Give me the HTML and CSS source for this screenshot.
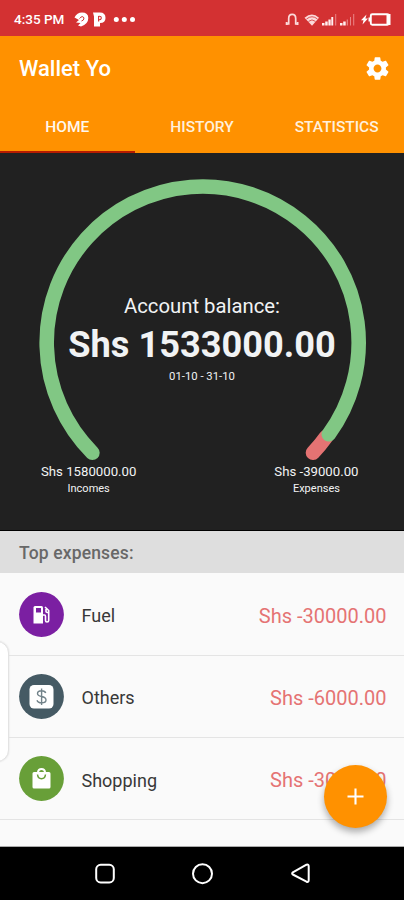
FILE: index.html
```
<!DOCTYPE html>
<html lang="en">
<head>
<meta charset="utf-8">
<title>Wallet Yo</title>
<link rel="stylesheet" href="styles.css">
</head>
<body>
<div class="screen">
  <div class="status">
    <span class="clock">4:35 PM</span>
    <svg class="notices" width="64" height="18" viewBox="0 0 64 18" fill="#fff">
      <path d="M.5 7.500 Q3 2.500 8 2.500 Q14.300 2.500 14.300 8 Q14.300 14 7 16.500 L4 15.500 L6.500 13 L2 12.500 L5 10 L.5 7.500Z"/>
      <path d="M5.500 8.500 Q8.500 5 10 8 Q10 10.500 7.500 11" fill="none" stroke="#d33132" stroke-width="1"/>
      <path d="M19 2.500 H26 Q31.500 2.500 31.500 8 Q31.500 13 26 13 V16.500 H20 V6.500Z"/>
      <path d="M24.600 6 V11.500 M24.600 6.300 Q27.700 6 27.200 8.500 Q26.700 10 24.700 9.700" fill="none" stroke="#d33132" stroke-width="1.100"/>
      <circle cx="42.300" cy="9.500" r="2.500"/><circle cx="50.300" cy="9.500" r="2.500"/><circle cx="58.500" cy="9.500" r="2.500"/>
    </svg>
    <svg class="signals" width="108" height="18" viewBox="0 0 108 18" fill="#fff">
      <g fill="none" stroke="#fbdada">
        <path d="M2 14 H4.700 V8.500 Q4.700 4.300 8.200 4.300 Q11.700 4.300 11.700 8.500 V14 H14" stroke-width="1.700"/>
        <path d="M2.700 12 V15 M13.500 12 V15" stroke-width="2"/>
      </g>
      <path d="M20.500 7.800 Q28 1 35 7.800 L28 15.800Z" fill="#fbdada"/>
      <path d="M22.500 9 Q28 4.500 33.500 9 M24.500 11.400 Q28 8.400 31.500 11.400" fill="none" stroke="#d33132" stroke-width=".8"/>
      <g fill="#fff0f0"><path d="M38 13h2.500v2.500h-2.500zM41.200 11.500h2.500v4h-2.500zM44.400 9.500h2.300v6h-2.300zM47.300 7h1.900v8.500h-1.900zM56 13h2.500v2.500h-2.500zM59.200 11.500h2.500v4h-2.500z"/></g>
      <g fill="#e98587"><path d="M51.200 4h1v11.500h-1zM62.700 9.500h1.200v6h-1.200zM66 7h1v8.500h-1zM69.200 4h1v11.500h-1z"/></g>
      <path d="M82.500 4.500 L77 10.200 H79.500 L78.500 14.500 L84 8.500 H81.400Z"/>
      <rect x="86.800" y="4.300" width="18" height="10.400" rx="1.500" fill="none" stroke="#fff" stroke-width="1.900"/>
      <path d="M84.500 7.500h2.500v4h-2.500zM102.500 4h4v11h-4z"/>
    </svg>
  </div>
  <header class="appbar">
    <div class="titlebar">
      <h1>Wallet Yo</h1>
      <svg width="27" height="27" viewBox="0 0 24 24" fill="#fff"><path d="M19.430 12.980c.04-.32.07-.64.07-.98s-.03-.66-.07-.98l2.110-1.650c.19-.15.24-.42.12-.64l-2-3.460c-.12-.22-.39-.3-.61-.22l-2.490 1c-.52-.4-1.080-.73-1.690-.98l-.38-2.650C14.460 2.180 14.250 2 14 2h-4c-.25 0-.46.18-.49.42l-.38 2.650c-.61.25-1.170.59-1.690.98l-2.490-1c-.23-.09-.49 0-.61.22l-2 3.460c-.13.22-.07.49.12.64l2.110 1.650c-.04.32-.07.65-.07.98s.03.66.07.98l-2.110 1.650c-.19.15-.24.42-.12.64l2 3.460c.12.22.39.3.61.22l2.490-1c.52.4 1.080.73 1.690.98l.38 2.650c.03.24.24.42.49.42h4c.25 0 .46-.18.49-.42l.38-2.650c.61-.25 1.170-.59 1.690-.98l2.490 1c.23.09.49 0 .61-.22l2-3.460c.12-.22.07-.49-.12-.64l-2.110-1.650zM12 15.500c-1.930 0-3.500-1.570-3.500-3.500s1.570-3.500 3.500-3.500 3.500 1.570 3.500 3.500-1.570 3.500-3.500 3.500z"/></svg>
    </div>
    <nav class="tabs"><a class="tab active">HOME</a><a class="tab">HISTORY</a><a class="tab">STATISTICS</a></nav>
  </header>
  <section class="summary">
    <svg class="gauge" width="404" height="310" viewBox="0 0 404 310" fill="none" stroke-width="14.600" stroke-linecap="round">
      <path d="M326 284 A156 156 0 0 1 313 299.800" stroke="#e57373"/>
      <path d="M92.400 299.800 A156 156 0 1 1 328.800 281.300" stroke="#81c784"/>
    </svg>
    <div class="balance">
      <div class="label">Account balance:</div>
      <div class="total">Shs 1533000.00</div>
      <div class="period">01-10 - 31-10</div>
    </div>
    <div class="ends">
      <div class="end"><div class="sum">Shs 1580000.00</div><div class="kind">Incomes</div></div>
      <div class="end"><div class="sum">Shs -39000.00</div><div class="kind">Expenses</div></div>
    </div>
  </section>
  <h2 class="section">Top expenses:</h2>
  <main class="list">
    <div class="row">
      <svg class="icon" width="45" height="45" viewBox="0 0 45 45"><circle cx="22.500" cy="22.500" r="22.400" fill="#7b1fa2"/>
        <path d="M14.500 31.500 V15.500 Q14.500 14 16 14 H22.500 Q24 14 24 15.500 V31.500Z" fill="#fff"/><path d="M17 16h5v4.500h-5z" fill="#7b1fa2"/>
        <path d="M24 23 H25.500 Q26.500 23 26.500 24.500 V28.500 Q26.500 30 28 30 Q29.700 30 29.700 28.500 V18.500 L26 15 M27 17 V19.500 Q27 20.500 29.500 20.500" fill="none" stroke="#fff" stroke-width="1.600"/></svg>
      <span class="name">Fuel</span><span class="amount">Shs -30000.00</span>
    </div>
    <div class="row">
      <svg class="icon" width="45" height="45" viewBox="0 0 45 45"><circle cx="22.500" cy="22.500" r="22.400" fill="#455a64"/><rect x="10.500" y="11" width="24" height="23.500" rx="4.500" fill="#fff"/>
        <path d="M26.700 19 Q26 16.700 22.500 16.700 Q18.500 16.700 18.500 19.500 Q18.500 21.700 22.500 22.500 Q27 23.300 27 26 Q27 28.800 22.700 28.800 Q18.700 28.800 18 26.200 M22.600 14.500 V31" fill="none" stroke="#72838a" stroke-width="1.400"/></svg>
      <span class="name">Others</span><span class="amount">Shs -6000.00</span>
    </div>
    <div class="row">
      <svg class="icon" width="45" height="45" viewBox="0 0 45 45"><circle cx="22.500" cy="22.500" r="22.400" fill="#689f38"/><path d="M15 16 H18 Q18.500 12 22.500 12 Q26.500 12 27 16 H30 Q31.500 16 31.500 17.500 V31 Q31.500 32.500 30 32.500 H15 Q13.500 32.500 13.500 31 V17.500 Q13.500 16 15 16Z" fill="#fff"/>
        <path d="M20 16 Q20.500 13.900 22.500 13.900 Q24.500 13.900 25 16Z" fill="#689f38"/><path d="M18.500 18.500 Q19 22.700 22.500 22.700 Q26 22.700 26.500 18.500" fill="none" stroke="#689f38" stroke-width="1.500"/></svg>
      <span class="name">Shopping</span><span class="amount">Shs -3000.00</span>
    </div>
    <div class="handle"></div>
    <div class="fab"><svg width="17" height="17" viewBox="0 0 17 17"><path d="M8.500 .500 V16.500 M.500 8.500 H16.500" stroke="#fff" stroke-width="2.100"/></svg></div>
  </main>
  <footer class="navbar">
    <svg width="404" height="53" viewBox="0 0 404 53" fill="none" stroke="#fff" stroke-width="2" stroke-linejoin="round">
      <rect x="96.200" y="17.800" width="17.600" height="17.600" rx="4.500"/><circle cx="202.500" cy="26.700" r="9.500"/><path d="M292.800 25.300 L306.500 17.700 Q308.700 17 308.700 19.500 V33 Q308.700 35.500 306.500 34.700 L292.800 27.500 Q291.500 26.500 292.800 25.300Z"/>
    </svg>
  </footer>
</div>
</body>
</html>
```
FILE: styles.css
```
* { box-sizing: border-box; margin: 0; padding: 0; }
body { width: 404px; font-family: Roboto, "Liberation Sans", sans-serif; background: #000; }
svg { display: block; flex: none; }
.screen { width: 404px; height: 900px; overflow: hidden; display: flex; flex-direction: column; }
.status { height: 36px; flex: none; background: #d33132; color: #fff; display: flex; align-items: center; padding: 1px 12px 0 14px; }
.clock { font-size: 13.5px; font-weight: 500; width: 60px; white-space: nowrap; }
.signals { margin-left: auto; }
.appbar { height: 117px; flex: none; background: #ff9100; color: #fff; display: flex; flex-direction: column; }
.titlebar { height: 65px; display: flex; align-items: center; justify-content: space-between; padding: 0 13px 0 19px; }
.titlebar h1 { font-size: 22px; font-weight: 500; }
.tabs { flex: 1; display: grid; grid-template-columns: repeat(3, 1fr); }
.tab { display: flex; align-items: center; justify-content: center; padding-top: 2px; font-size: 15.500px; letter-spacing: -.02px; font-weight: 500; color: #fff0dc; border-bottom: 2px solid transparent; }
.tab.active { border-bottom-color: #b71c00; color: #fff7ee; }
.summary { height: 378px; flex: none; background: #212121; border-bottom: 1px solid #000; color: #f1f3f4; display: grid; grid-template-rows: 310px auto; }
.gauge, .balance { grid-area: 1 / 1; }
.balance { padding-top: 140px; display: flex; flex-direction: column; align-items: center; white-space: nowrap; }
.label { font-size: 20.300px; line-height: 26px; }
.total { font-size: 36.200px; line-height: 51px; font-weight: 700; }
.period { font-size: 11.300px; line-height: 13px; }
.ends { grid-area: 2 / 1; display: flex; justify-content: space-between; padding: 0 45.500px 0 41px; text-align: center; }
.sum { font-size: 13.200px; line-height: 18px; white-space: nowrap; }
.kind { font-size: 11px; line-height: 16px; }
.section { height: 42px; flex: none; background: #dedede; color: #686868; font-size: 17.500px; letter-spacing: .15px; font-weight: 500; line-height: 45px; padding-left: 19px; }
.list { height: 274px; flex: none; background: #fafafa; position: relative; border-bottom: 1px solid #aaa; padding-top: .500px; }
.row { height: 82.300px; display: flex; align-items: center; padding: 0 17.500px 0 18.500px; border-bottom: 1.500px solid #e4e4e4; }
.name { font-size: 18px; color: #383838; margin-left: 18px; padding-top: 3px; }
.amount { font-size: 20px; color: #e57373; margin-left: auto; padding-top: 3px; }
.handle { position: absolute; left: -20px; top: 68px; width: 29px; height: 121px; border-radius: 12px; background: #fff; border: 1px solid #e3e3e3; box-shadow: 0 0 2px #ddd; }
.fab { position: absolute; left: 324px; top: 192px; width: 63px; height: 63px; border-radius: 50%; background: #ff9100; box-shadow: 0 4px 7px rgba(0,0,0,.32); display: flex; align-items: center; justify-content: center; }
.navbar { height: 53px; flex: none; background: #000; }
```
